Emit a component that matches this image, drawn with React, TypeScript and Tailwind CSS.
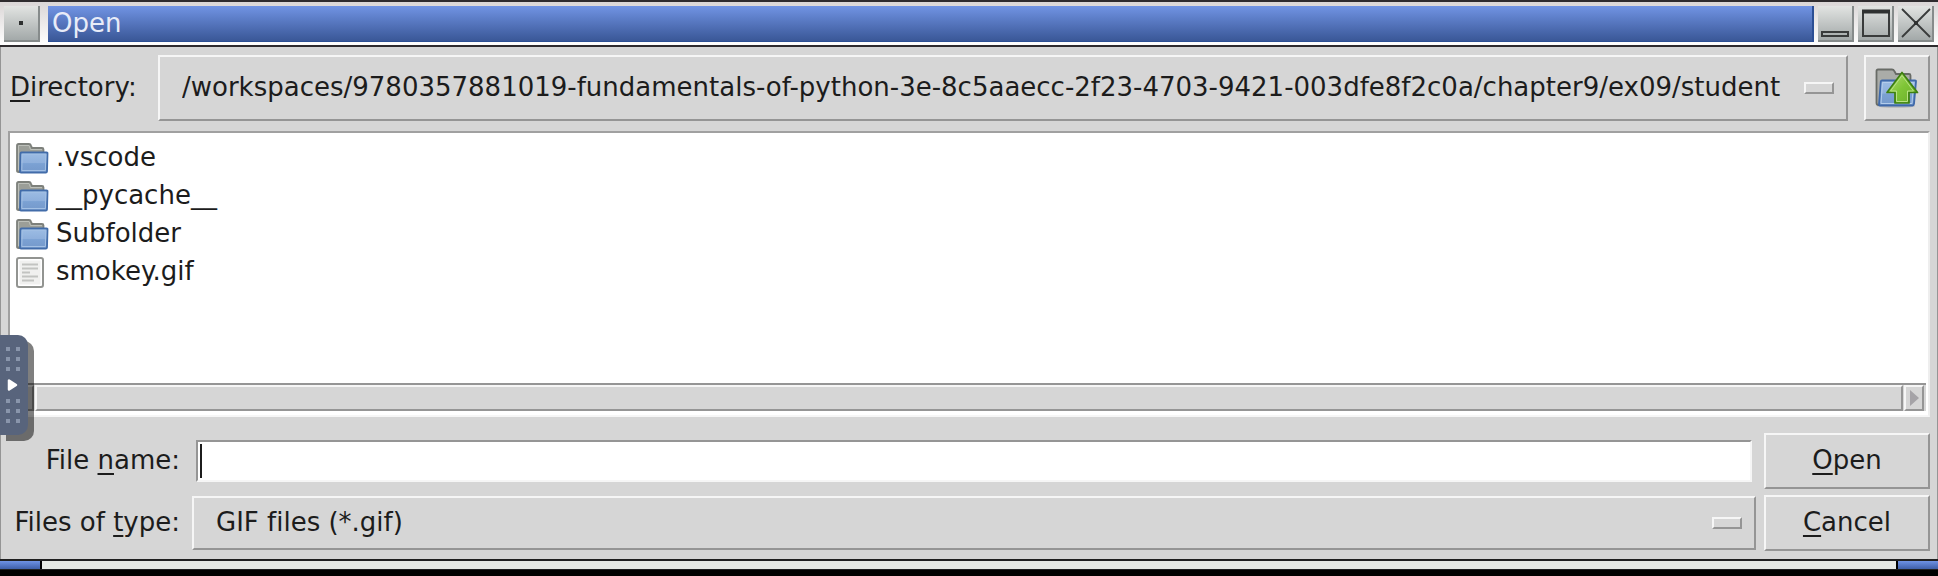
import React, { useState } from "react";

const DIRECTORY =
  "/workspaces/9780357881019-fundamentals-of-python-3e-8c5aaecc-2f23-4703-9421-003dfe8f2c0a/chapter9/ex09/student";

const ENTRIES = [
  { name: ".vscode", folder: true },
  { name: "__pycache__", folder: true },
  { name: "Subfolder", folder: true },
  { name: "smokey.gif", folder: false },
];

const RAISED =
  "border-2 border-t-[#f6f6f6] border-l-[#f6f6f6] border-b-[#959595] border-r-[#959595] bg-[#d6d6d6]";

const SELECT = `block w-full appearance-none pb-0.5 pl-[22px] outline-none ${RAISED}`;

const TITLE_BUTTON =
  "flex size-9 items-center justify-center border-b-2 border-r-2 border-[#868b8b] bg-linear-to-b from-[#e2e4e2] to-[#a3a9a9]";

function FolderGradient() {
  return (
    <linearGradient id="folder-front" x1="0" y1="0" x2="0" y2="1">
      <stop offset="0" stopColor="#9dbde4" />
      <stop offset="0.5" stopColor="#8fb0dc" />
      <stop offset="0.55" stopColor="#7ba1d3" />
      <stop offset="1" stopColor="#7599cb" />
    </linearGradient>
  );
}

function FolderIcon() {
  return (
    <svg viewBox="0 0 33 31" className="h-[31px] w-[33px]" aria-hidden="true">
      <defs>
        <FolderGradient />
      </defs>
      <path d="M1 28V2.500Q1 1 2.500 1H13q1.500 0 2 1.500L16 5h10q1.500 0 1.500 1.500V12L6 29H2.500Q1 29 1 28Z" fill="#9b9e98" stroke="#7d807b" strokeWidth="1.800" />
      <path d="M2.500 27V2.500H13L14.500 6.500H26" fill="none" stroke="#bcbfb9" />
      <path d="M5.500 9.500h25q1.200 0 1 1L31 28.500q-.1 1.200-1.200 1.200H5q-1 0-1-1.200L4.500 10.500q0-1 1-1Z" fill="url(#folder-front)" stroke="#426ca9" strokeWidth="1.800" />
      <path d="M6.200 11.200h23.600L29.400 27.500H5.800Z" fill="none" stroke="#a3c0e4" strokeWidth="1" />
    </svg>
  );
}

function FileIcon() {
  return (
    <svg viewBox="0 0 33 31" className="h-[31px] w-[33px]" aria-hidden="true">
      <rect x="1" y="1" width="26" height="29" rx="2" fill="#fff" stroke="#929491" strokeWidth="2" />
      <rect x="3.500" y="3.500" width="21" height="24" fill="#f0f0ef" />
      <path d="M6 7.500h16M6 11.500h16M6 15.500h8M6 19.500h16M6 23.500h12" stroke="#c2c3c1" strokeWidth="1.800" />
    </svg>
  );
}

function UpIcon() {
  return (
    <svg viewBox="0 0 44 40" className="h-10 w-11" aria-hidden="true">
      <defs>
        <FolderGradient />
        <linearGradient id="arrow" x1="0" y1="0" x2="1" y2="1">
          <stop offset="0" stopColor="#b5dd78" />
          <stop offset="0.5" stopColor="#7fc536" />
          <stop offset="1" stopColor="#6aab2a" />
        </linearGradient>
      </defs>
      <ellipse cx="21" cy="38" rx="19" ry="2" fill="#bdbdbd" />
      <path d="M1.500 35V3q0-1.500 1.500-1.500h14q1.500 0 2.300 1.500L21 6h13q1.500 0 1.500 1.500V14L8 37H3.500q-2 0-2-2Z" fill="#aaaca8" stroke="#686b66" strokeWidth="1.800" />
      <path d="M7 12.500h33q1.200 0 1 1L39 36q-.2 1.500-1.500 1.500H5q-1.200 0-1-1.200L5.800 13.500q.2-1 1.200-1Z" fill="url(#folder-front)" stroke="#3f69aa" strokeWidth="1.800" />
      <path d="M7.500 14.500h31L37 35.500H6Z" fill="none" stroke="#b3cceb" />
      <path d="M27 4.500 12 24.500h8V35h14V24.500h8.500Z" fill="url(#arrow)" stroke="#3d7f10" strokeWidth="1.700" strokeLinejoin="round" />
      <path d="M27 7.500 15.500 23h6v10.500h11V23h6Z" fill="none" stroke="#b9e187" strokeWidth="1" />
    </svg>
  );
}

function MenuMark() {
  return (
    <span className="pointer-events-none absolute inset-y-0 right-3.5 flex items-center">
      <span className={`h-3 w-[30px] ${RAISED}`} />
    </span>
  );
}

function Accel({ children }: { children: React.ReactNode }) {
  return <span className="underline decoration-2 underline-offset-4">{children}</span>;
}

function TitleBar() {
  return (
    <header className="flex items-center gap-1 border-t-2 border-b-2 border-[#2e2b2e] bg-linear-to-b from-[#dad6d6] to-white px-1 pt-1 pb-[3px]">
      <button type="button" aria-label="Window menu" className={`${TITLE_BUTTON} mr-1`}>
        <span className="size-1 bg-[#2e3030]" />
      </button>
      <h1 className="flex h-9 flex-1 items-center border-r-2 border-b border-[#2c4f94] bg-linear-to-b from-[#7194e4] to-[#3a5797] pb-0.5 pl-1 text-[#e8ecf8]">
        Open
      </h1>
      <button type="button" aria-label="Minimize" className={TITLE_BUTTON}>
        <svg viewBox="0 0 34 34" className="size-[34px]">
          <rect x="4" y="26" width="26" height="4" fill="none" stroke="#393b3b" strokeWidth="2" />
        </svg>
      </button>
      <button type="button" aria-label="Maximize" className={TITLE_BUTTON}>
        <svg viewBox="0 0 34 34" className="size-[34px]">
          <path d="M5 4v26h26V4" fill="none" stroke="#393b3b" strokeWidth="2" />
          <path d="M4 5.500h28" stroke="#2f3131" strokeWidth="4" />
        </svg>
      </button>
      <button type="button" aria-label="Close" className={TITLE_BUTTON}>
        <svg viewBox="0 0 34 34" className="size-[34px]">
          <path d="m4 3 28 28M32 3 4 31" stroke="#393b3b" strokeWidth="1.800" />
          <rect x="16" y="15" width="4" height="4" fill="#2f3131" />
        </svg>
      </button>
    </header>
  );
}

function ScrollBar() {
  return (
    <div className="mx-0.5 flex h-7 gap-px border-t-2 border-[#959595] bg-[#d6d6d6] px-0.5">
      <button type="button" aria-label="Scroll left" className={`w-5 ${RAISED}`} />
      <div className={`flex-1 ${RAISED}`} />
      <button type="button" aria-label="Scroll right" className={`flex w-5 items-center justify-center ${RAISED}`}>
        <svg viewBox="0 0 10 16" className="h-4 w-2.5">
          <path d="M1 0v16l9-8Z" fill="#a5a3a7" />
        </svg>
      </button>
    </div>
  );
}

function Grip() {
  return (
    <svg viewBox="0 0 14 24" className="h-6 w-3.5" fill="#8995ab" aria-hidden="true">
      <path d="M0 0h4v4H0ZM10 0h4v4h-4ZM0 10h4v4H0ZM10 10h4v4h-4ZM0 20h4v4H0ZM10 20h4v4h-4Z" />
    </svg>
  );
}

export default function App() {
  const [fileName, setFileName] = useState("");

  return (
    <div className="relative min-h-screen bg-black font-['DejaVu_Sans',sans-serif] text-[26px] leading-8 text-[#1c1c1c] [font-variant-ligatures:none]">
      <TitleBar />
      <main className="border-x border-[#959595] bg-[#d6d6d6] px-[7px] py-2">
        <div className="mb-2.5 flex items-center gap-4">
          <label htmlFor="directory" className="ml-0.5 w-[132px] pb-0.5">
            <Accel>D</Accel>irectory:
          </label>
          <div className="relative min-w-0 flex-1">
            <select id="directory" className={`h-[66px] ${SELECT}`}>
              <option>{DIRECTORY}</option>
            </select>
            <MenuMark />
          </div>
          <button type="button" aria-label="Up one level" className={`flex size-[66px] items-center justify-center ${RAISED}`}>
            <UpIcon />
          </button>
        </div>

        <section className="flex h-[286px] flex-col border-2 border-t-[#a0a0a0] border-r-[#eeeeee] border-b-[#f6f6f6] border-l-[#a0a0a0] bg-white pb-1">
          <ul className="flex-1 pt-1.5">
            {ENTRIES.map((entry) => (
              <li key={entry.name}>
                <button type="button" className="flex h-[38px] items-center gap-[7px] pl-1.5">
                  {entry.folder ? <FolderIcon /> : <FileIcon />}
                  <span className="pb-0.5">{entry.name}</span>
                </button>
              </li>
            ))}
          </ul>
          <ScrollBar />
        </section>

        <form
          className="mt-4 grid grid-cols-[176px_1fr_166px] items-center gap-x-2 gap-y-1.5"
          onSubmit={(event) => event.preventDefault()}
        >
          <label htmlFor="file-name" className="mr-1 pb-0.5 text-right whitespace-nowrap">
            File <Accel>n</Accel>ame:
          </label>
          <div className="relative mx-1">
            <input
              id="file-name"
              autoFocus
              value={fileName}
              onChange={(event) => setFileName(event.target.value)}
              className="peer block h-[42px] w-full border-2 border-t-[#959595] border-r-[#f6f6f6] border-b-[#f6f6f6] border-l-[#959595] bg-white px-0.5 caret-transparent outline-none not-placeholder-shown:caret-black"
              placeholder=" "
            />
            <span className="pointer-events-none absolute top-1 bottom-1 left-1 hidden w-0.5 bg-[#1c1c1c] peer-placeholder-shown:block" />
          </div>
          <button type="submit" className={`h-14 pb-0.5 ${RAISED}`}>
            <Accel>O</Accel>pen
          </button>
          <label htmlFor="file-type" className="mr-1 pb-0.5 text-right whitespace-nowrap">
            Files of <Accel>t</Accel>ype:
          </label>
          <div className="relative">
            <select id="file-type" className={`h-[54px] ${SELECT}`}>
              <option>GIF files (*.gif)</option>
            </select>
            <MenuMark />
          </div>
          <button type="button" className={`h-14 pb-0.5 ${RAISED}`}>
            <Accel>C</Accel>ancel
          </button>
        </form>
      </main>
      <footer className="flex h-[11px] border-t-2 border-b border-[#202020] bg-[#e6e9e4]">
        <div className="w-[42px] border-r-2 border-black bg-linear-to-b from-[#6f92e4] to-[#3f5fa8]" />
        <div className="flex-1" />
        <div className="w-[42px] border-l-2 border-black bg-linear-to-b from-[#6f92e4] to-[#3f5fa8]" />
      </footer>

      <button
        type="button"
        aria-label="Show control bar"
        className="absolute top-[335px] left-0 flex h-[100px] w-7 flex-col items-start justify-between rounded-r-[10px] bg-[#58647c] py-3 pl-1.5 shadow-[6px_6px_0_rgba(0,0,0,0.5)]"
      >
        <Grip />
        <svg viewBox="0 0 12 14" className="h-3.5 w-3" aria-hidden="true">
          <path d="M3 2.500v9l7-4.500Z" fill="white" stroke="white" strokeWidth="2.500" strokeLinejoin="round" />
        </svg>
        <Grip />
      </button>
    </div>
  );
}
